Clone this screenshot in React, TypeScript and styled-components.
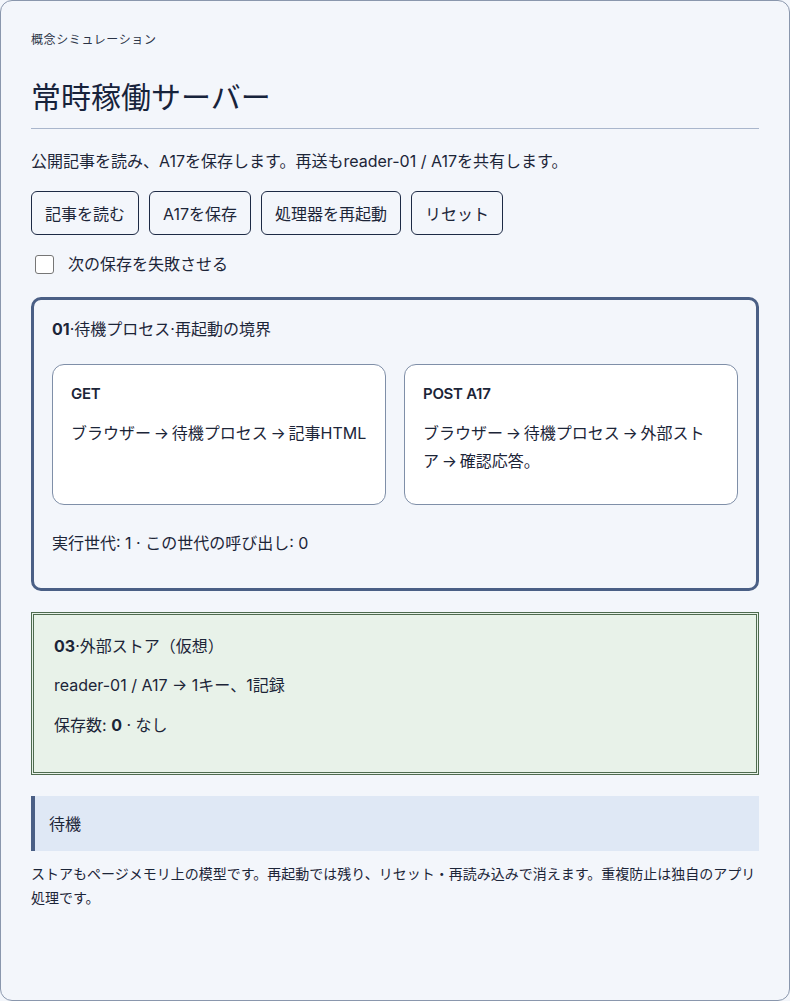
import React, { useState } from "react"
import styled, { createGlobalStyle } from "styled-components"

const GlobalStyle = createGlobalStyle`
  * { box-sizing: border-box; }
  body {
    margin: 0;
    background: #f3f6fb;
    color: #1c2538;
    font-family: Inter, "Noto Sans CJK JP", sans-serif;
  }
`

const Shell = styled.main`
  min-height: 100vh;
  background: #f3f6fb;
  border: 1px solid #8a97ad;
  border-radius: 12px;
  padding: 30px 30px 40px;
`

const Eyebrow = styled.div`
  font-size: 12px;
  line-height: 18px;
  letter-spacing: 0.05em;
  color: #2a3346;
`

const Title = styled.h1`
  margin: 30px 0 0;
  padding-bottom: 13px;
  font-size: 30px;
  line-height: 36px;
  font-weight: 400;
  color: #17233b;
  border-bottom: 1px solid #a9b6cc;
`

const Lead = styled.p`
  margin: 21px 0 0;
  font-size: 16px;
  line-height: 22px;
`

const Toolbar = styled.div`
  display: flex;
  gap: 10px;
  margin-top: 19px;
`

const Button = styled.button`
  height: 44px;
  padding: 0 13px;
  border: 1px solid #1d2a45;
  border-radius: 6px;
  background: transparent;
  color: #1c2538;
  font: inherit;
  font-size: 16px;
  cursor: pointer;
`

const CheckRow = styled.label`
  display: flex;
  align-items: center;
  gap: 14px;
  margin-top: 18px;
  font-size: 16px;
  line-height: 22px;
  cursor: pointer;
`

const Box = styled.span<{ $on: boolean }>`
  width: 19px;
  height: 19px;
  margin-left: 4px;
  border: 1px solid #767676;
  border-radius: 3px;
  background: ${(p) => (p.$on ? "#4a5f85" : "#fff")};
`

const Stage = styled.section`
  margin-top: 22px;
  padding: 18px 18px 34px;
  border: 3px solid #4a5f85;
  border-radius: 10px;
`

const PanelTitle = styled.div`
  font-size: 16px;
  line-height: 22px;

  b { font-weight: 700; }
`

const RouteGrid = styled.div`
  display: grid;
  grid-template-columns: 1fr 1fr;
  gap: 18px;
  margin-top: 24px;
`

const RouteCard = styled.div`
  min-height: 141px;
  padding: 18px;
  background: #fff;
  border: 1px solid #7f8fa8;
  border-radius: 12px;
`

const RouteName = styled.div`
  font-size: 15px;
  line-height: 22px;
  font-weight: 600;
  letter-spacing: -0.02em;
`

/* arrows sit a little tighter than a normal space */
const RouteFlow = styled.div`
  margin-top: 14px;
  font-size: 16px;
  line-height: 28px;
  word-spacing: -1.75px;
`

const Meta = styled.div`
  margin-top: 27px;
  font-size: 16px;
  line-height: 22px;
`

const StorePanel = styled.section`
  margin-top: 21px;
  padding: 20px 20px 36px;
  background: #e8f2e9;
  border: 3px double #4e6b4f;
`

const StoreLine = styled.div<{ $gap: number }>`
  margin-top: ${(p) => p.$gap}px;
  font-size: 16px;
  line-height: 22px;

  b { font-weight: 700; }
`

const Status = styled.div`
  margin-top: 21px;
  padding: 17px 14px 15px;
  background: #dfe8f5;
  border-left: 4px solid #4a5f85;
  font-size: 16px;
  line-height: 23px;
`

const Note = styled.p`
  margin: 11px 0 0;
  font-size: 14px;
  line-height: 24px;
`

const routes = [
  { name: "GET", flow: "ブラウザー → 待機プロセス → 記事HTML" },
  { name: "POST A17", flow: "ブラウザー → 待機プロセス → 外部ストア → 確認応答。" },
]

export default function App() {
  const [failNext, setFailNext] = useState(false)

  return (
    <>
      <GlobalStyle />
      <Shell>
        <Eyebrow>概念シミュレーション</Eyebrow>
        <Title>常時稼働サーバー</Title>
        <Lead>公開記事を読み、A17を保存します。再送もreader-01 / A17を共有します。</Lead>

        <Toolbar>
          <Button>記事を読む</Button>
          <Button>A17を保存</Button>
          <Button>処理器を再起動</Button>
          <Button>リセット</Button>
        </Toolbar>

        <CheckRow onClick={() => setFailNext(!failNext)}>
          <Box $on={failNext} />
          次の保存を失敗させる
        </CheckRow>

        <Stage>
          <PanelTitle><b>01</b>·待機プロセス·再起動の境界</PanelTitle>
          <RouteGrid>
            {routes.map((r) => (
              <RouteCard key={r.name}>
                <RouteName>{r.name}</RouteName>
                <RouteFlow>{r.flow}</RouteFlow>
              </RouteCard>
            ))}
          </RouteGrid>
          <Meta>実行世代: 1 · この世代の呼び出し: 0</Meta>
        </Stage>

        <StorePanel>
          <PanelTitle><b>03</b>·外部ストア（仮想）</PanelTitle>
          <StoreLine $gap={17}>reader-01 / A17 → 1キー、1記録</StoreLine>
          <StoreLine $gap={18}>保存数: <b>0</b> · なし</StoreLine>
        </StorePanel>

        <Status>待機</Status>
        <Note>ストアもページメモリ上の模型です。再起動では残り、リセット・再読み込みで消えます。重複防止は独自のアプリ処理です。</Note>
      </Shell>
    </>
  )
}
